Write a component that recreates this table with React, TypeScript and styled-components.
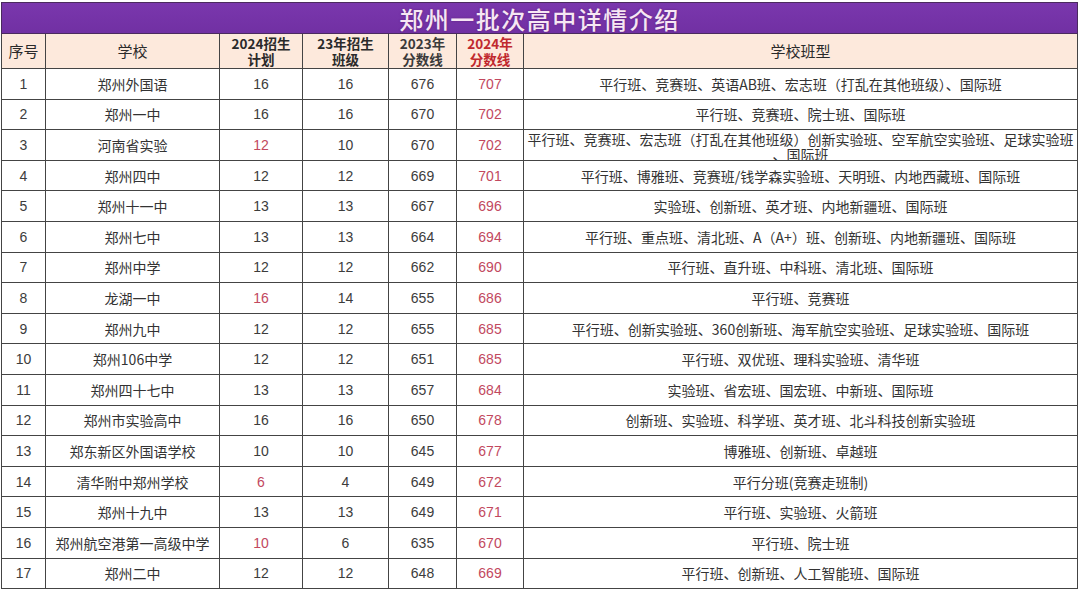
import styled, { createGlobalStyle } from "styled-components";

type School = {
  no: number;
  name: string;
  plan: string;
  planRed?: boolean;
  classes: string;
  score2023: string;
  score2024: string;
  types: string;
};

const schools: School[] = [
  { no: 1, name: "郑州外国语", plan: "16", classes: "16", score2023: "676", score2024: "707", types: "平行班、竞赛班、英语AB班、宏志班（打乱在其他班级）、国际班" },
  { no: 2, name: "郑州一中", plan: "16", classes: "16", score2023: "670", score2024: "702", types: "平行班、竞赛班、院士班、国际班" },
  { no: 3, name: "河南省实验", plan: "12", planRed: true, classes: "10", score2023: "670", score2024: "702", types: "平行班、竞赛班、宏志班（打乱在其他班级）创新实验班、空军航空实验班、足球实验班、国际班" },
  { no: 4, name: "郑州四中", plan: "12", classes: "12", score2023: "669", score2024: "701", types: "平行班、博雅班、竞赛班/钱学森实验班、天明班、内地西藏班、国际班" },
  { no: 5, name: "郑州十一中", plan: "13", classes: "13", score2023: "667", score2024: "696", types: "实验班、创新班、英才班、内地新疆班、国际班" },
  { no: 6, name: "郑州七中", plan: "13", classes: "13", score2023: "664", score2024: "694", types: "平行班、重点班、清北班、A（A+）班、创新班、内地新疆班、国际班" },
  { no: 7, name: "郑州中学", plan: "12", classes: "12", score2023: "662", score2024: "690", types: "平行班、直升班、中科班、清北班、国际班" },
  { no: 8, name: "龙湖一中", plan: "16", planRed: true, classes: "14", score2023: "655", score2024: "686", types: "平行班、竞赛班" },
  { no: 9, name: "郑州九中", plan: "12", classes: "12", score2023: "655", score2024: "685", types: "平行班、创新实验班、360创新班、海军航空实验班、足球实验班、国际班" },
  { no: 10, name: "郑州106中学", plan: "12", classes: "12", score2023: "651", score2024: "685", types: "平行班、双优班、理科实验班、清华班" },
  { no: 11, name: "郑州四十七中", plan: "13", classes: "13", score2023: "657", score2024: "684", types: "实验班、省宏班、国宏班、中新班、国际班" },
  { no: 12, name: "郑州市实验高中", plan: "16", classes: "16", score2023: "650", score2024: "678", types: "创新班、实验班、科学班、英才班、北斗科技创新实验班" },
  { no: 13, name: "郑东新区外国语学校", plan: "10", classes: "10", score2023: "645", score2024: "677", types: "博雅班、创新班、卓越班" },
  { no: 14, name: "清华附中郑州学校", plan: "6", planRed: true, classes: "4", score2023: "649", score2024: "672", types: "平行分班(竞赛走班制)" },
  { no: 15, name: "郑州十九中", plan: "13", classes: "13", score2023: "649", score2024: "671", types: "平行班、实验班、火箭班" },
  { no: 16, name: "郑州航空港第一高级中学", plan: "10", planRed: true, classes: "6", score2023: "635", score2024: "670", types: "平行班、院士班" },
  { no: 17, name: "郑州二中", plan: "12", classes: "12", score2023: "648", score2024: "669", types: "平行班、创新班、人工智能班、国际班" },
];

const GlobalStyle = createGlobalStyle`
  html, body {
    margin: 0;
    padding: 0;
    background: #ffffff;
  }
  body {
    font-family: "Noto Sans CJK SC", "Liberation Sans", sans-serif;
  }
`;

const App = () => (
  <>
    <GlobalStyle />
    <Sheet>
      <TitleBar>郑州一批次高中详情介绍</TitleBar>
      <Grid>
        <HeadCell>序号</HeadCell>
        <HeadCell>学校</HeadCell>
        <HeadCell $bold>
          2024招生
          <br />
          计划
        </HeadCell>
        <HeadCell $bold>
          23年招生
          <br />
          班级
        </HeadCell>
        <HeadCell $bold $tone="#3a3a3a">
          2023年
          <br />
          分数线
        </HeadCell>
        <HeadCell $bold $tone="#c0282e">
          2024年
          <br />
          分数线
        </HeadCell>
        <HeadCell>学校班型</HeadCell>

        {schools.map((s) => {
          const wrap = s.types.length > 34;
          return (
            <Row key={s.no}>
              <NumCell>{s.no}</NumCell>
              <NameCell>{s.name}</NameCell>
              <NumCell $red={s.planRed}>{s.plan}</NumCell>
              <NumCell>{s.classes}</NumCell>
              <NumCell>{s.score2023}</NumCell>
              <NumCell $red>{s.score2024}</NumCell>
              <TypeCell $wrap={wrap}>
                <TypeText $wrap={wrap}>{s.types}</TypeText>
              </TypeCell>
            </Row>
          );
        })}
      </Grid>
    </Sheet>
  </>
);

export default App;

const Sheet = styled.div`
  width: 1077px;
  margin-left: 1px;
  display: flex;
  flex-direction: column;
`;

const TitleBar = styled.div`
  height: 30px;
  margin-top: 2px;
  background: linear-gradient(180deg, #7a37ad 0%, #7130a3 100%);
  border: 1px solid #4a2a5e;
  color: #f6e6f4;
  font-family: "Noto Sans CJK SC", sans-serif;
  font-size: 24px;
  font-weight: 500;
  letter-spacing: 1.5px;
  display: flex;
  align-items: center;
  justify-content: center;
  text-shadow: 0 0 2px rgba(80, 20, 90, 0.6);
`;

const Grid = styled.div`
  display: grid;
  grid-template-columns: 44px 174px 83px 86px 68px 67px 1fr;
  grid-template-rows: 35px;
  grid-auto-rows: 30.6px;
  border-left: 1px solid #444;
`;

const Row = styled.div`
  display: contents;
`;

const BaseCell = styled.div`
  border-right: 1px solid #444;
  border-bottom: 1px solid #444;
  display: flex;
  align-items: center;
  justify-content: center;
  text-align: center;
  overflow: hidden;
  box-sizing: border-box;
`;

const HeadCell = styled(BaseCell)<{ $bold?: boolean; $tone?: string }>`
  background: #fde9dc;
  color: ${(p) => p.$tone ?? "#2a2a2a"};
  font-size: ${(p) => (p.$bold ? "13.5px" : "15px")};
  font-weight: ${(p) => (p.$bold ? 700 : 400)};
  line-height: 16.5px;
`;

const NumCell = styled(BaseCell)<{ $red?: boolean }>`
  font-family: "Liberation Sans", Arial, sans-serif;
  font-size: 14px;
  color: ${(p) => (p.$red ? "#c2485e" : "#3c3c3c")};
`;

const NameCell = styled(BaseCell)`
  font-size: 14px;
  color: #333;
`;

const TypeCell = styled(BaseCell)<{ $wrap?: boolean }>`
  align-items: ${(p) => (p.$wrap ? "flex-start" : "center")};
  padding: 0;
`;

const TypeText = styled.div<{ $wrap?: boolean }>`
  font-size: 14px;
  color: #333;
  line-height: ${(p) => (p.$wrap ? "15px" : "18px")};
  padding-top: ${(p) => (p.$wrap ? "2px" : "0")};
  white-space: ${(p) => (p.$wrap ? "normal" : "nowrap")};
  line-break: anywhere;
`;
